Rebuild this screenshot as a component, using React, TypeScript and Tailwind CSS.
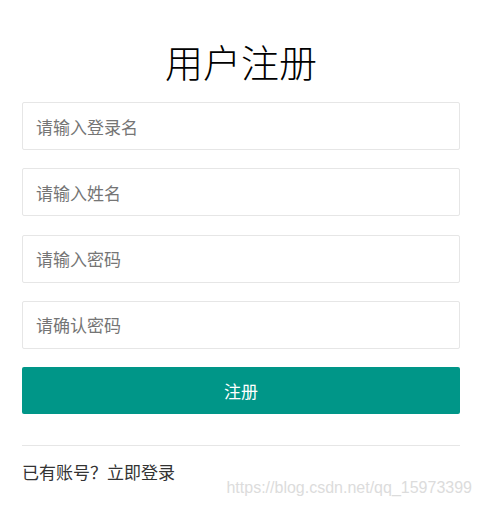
export default function App() {
  const fields = ['请输入登录名', '请输入姓名', '请输入密码', '请确认密码']

  return (
    <div
      className="relative w-[482px] h-[507px] bg-white overflow-hidden"
      style={{ fontFamily: '"Microsoft YaHei", "Noto Sans CJK SC", sans-serif' }}
    >
      <div className="px-[22px] pt-[36px]">
        <h1 className="text-center text-[38px] leading-[50px] font-light text-black mb-[16px]">用户注册</h1>

        <div className="flex flex-col gap-[18.25px]">
          {fields.map((f) => (
            <input
              key={f}
              placeholder={f}
              type={f.includes('密码') ? 'password' : 'text'}
              className="h-[48px] w-full border border-[#e6e6e6] rounded-[2px] px-[13px] text-[17px] text-[#333] placeholder:text-[#757575] outline-none"
            />
          ))}
          <button className="h-[47px] w-full rounded-[2px] bg-[#009688] text-white text-[17px]">注册</button>
        </div>

        <div className="mt-[31px] border-t border-[#e6e6e6] pt-[12px]">
          <span className="text-[17px] leading-[28px] text-[#333]">已有账号？立即登录</span>
        </div>
      </div>

      <div
        className="absolute right-[10px] bottom-[7px] text-[16px] text-[#dcdcdc]"
        style={{ fontFamily: '"Liberation Sans", Arial, sans-serif' }}
      >
        https://blog.csdn.net/qq_15973399
      </div>
    </div>
  )
}
